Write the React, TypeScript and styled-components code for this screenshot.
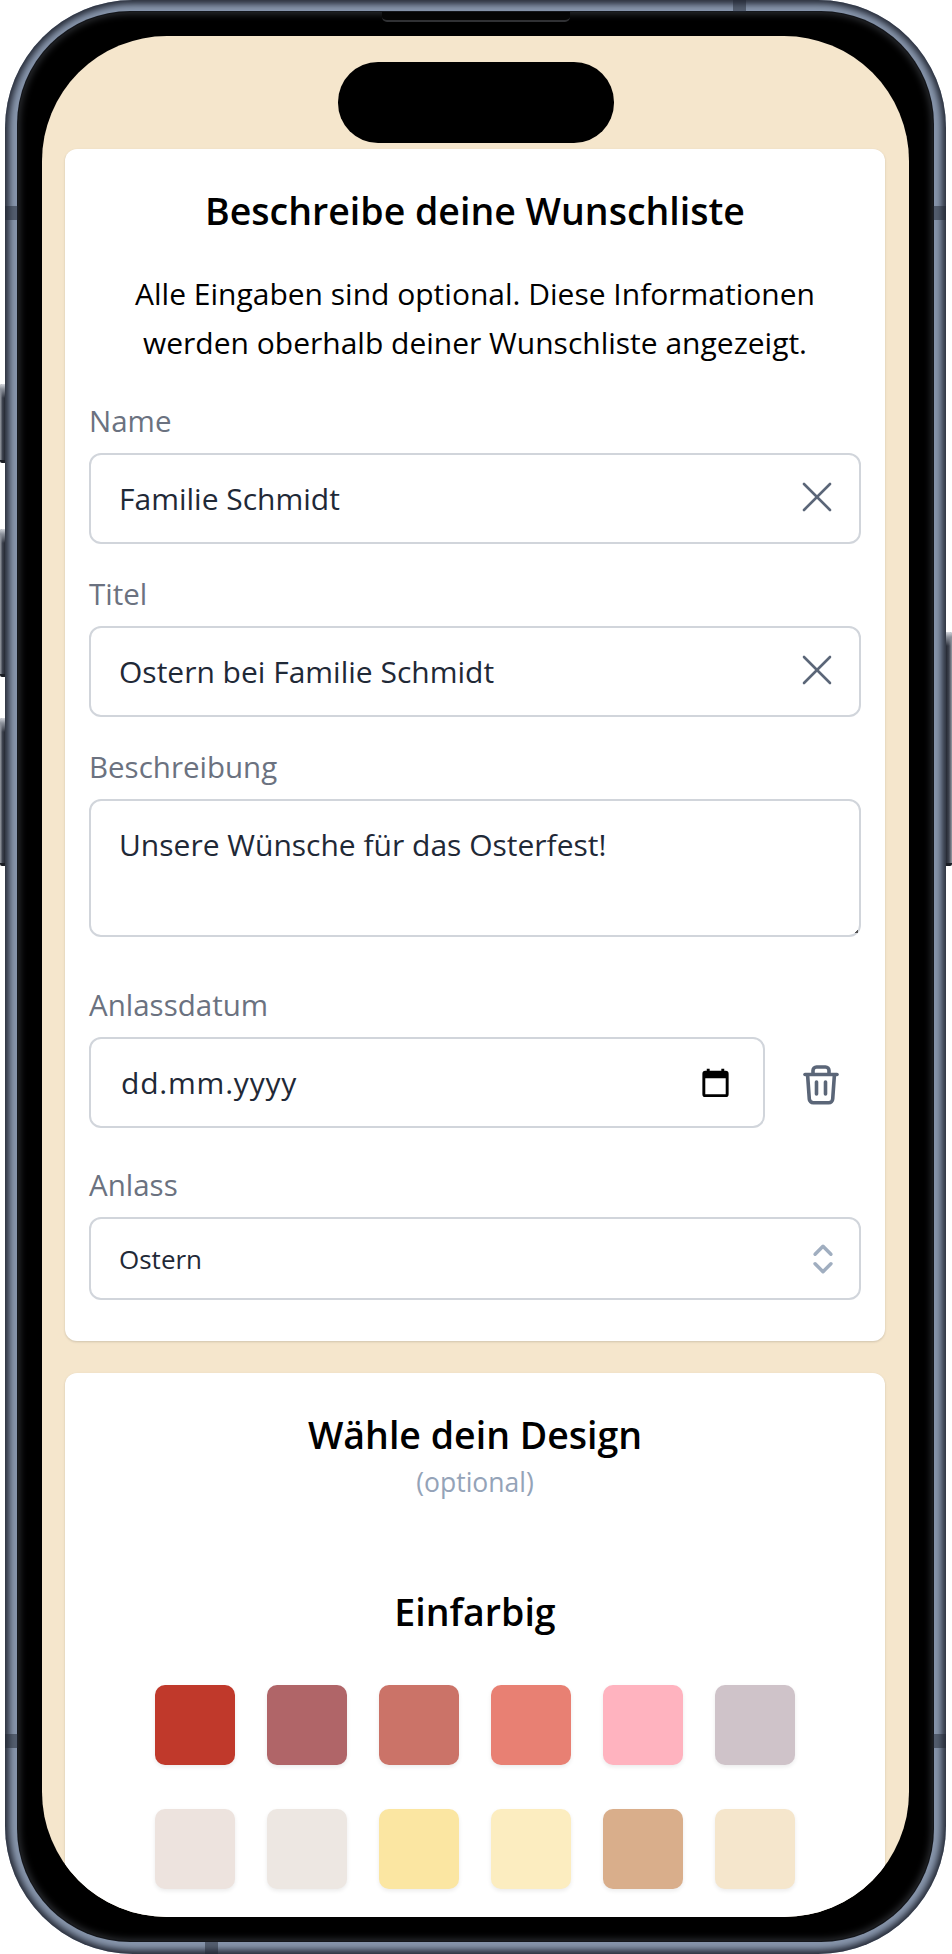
import React from 'react';
import styled, { createGlobalStyle } from 'styled-components';
import { X, ChevronsUpDown } from 'lucide-react';

const GlobalStyle = createGlobalStyle`
  html, body {
    margin: 0;
    padding: 0;
    background: #fff;
  }
  body {
    font-family: "Open Sans", "Noto Sans", "Liberation Sans", sans-serif;
  }
`;

const Device = styled.div`
  position: relative;
  width: 952px;
  height: 1954px;
  box-sizing: border-box;
  padding: 0 6px 0 5px;
`;

const Band = styled.div`
  height: 100%;
  box-sizing: border-box;
  padding: 12px 13px 13px;
  border-radius: 128px;
  background: #8795ab;
  box-shadow: inset 0 0 6px 4px #262b37;
`;

const Bezel = styled.div`
  position: relative;
  height: 100%;
  box-sizing: border-box;
  padding: 24px;
  border-radius: 112px;
  background: #000;
  box-shadow: 0 0 0 1px #15171c, inset 0 0 7px 2px #2b2d31;
`;

const Screen = styled.div`
  height: 100%;
  box-sizing: border-box;
  padding: 113px 24px 0 23px;
  border-radius: 125px;
  overflow: hidden;
  background: #f5e6cc;
  display: flex;
  flex-direction: column;
  gap: 32px;
`;

const Island = styled.div`
  position: absolute;
  top: 50px;
  left: 320px;
  width: 276px;
  height: 81px;
  border-radius: 40px;
  background: #000;
`;

const Speaker = styled.div`
  position: absolute;
  top: 0;
  left: 364px;
  width: 188px;
  height: 8px;
  border-bottom: 2px solid #303134;
  border-radius: 0 0 5px 5px;
  background: #050505;
`;

const LeftButtons = styled.div`
  position: absolute;
  top: 384px;
  left: 0;
  display: flex;
  flex-direction: column;
  gap: 66px;
`;

const VolumeButtons = styled.div`
  display: flex;
  flex-direction: column;
  gap: 41px;
`;

const RightButton = styled.div`
  position: absolute;
  top: 632px;
  right: 0;
`;

const SideButton = styled.div<{ $side: 'left' | 'right'; $height: number }>`
  width: ${p => (p.$side === 'left' ? 5 : 6)}px;
  height: ${p => p.$height}px;
  box-sizing: border-box;
  border-bottom: 3px solid #1b1e25;
  border-radius: ${p => (p.$side === 'left' ? '2px 0 0 2px' : '0 2px 2px 0')};
  background: linear-gradient(180deg, #d5d8de 0, #8b909a 5px, transparent 14px),
    linear-gradient(${p => (p.$side === 'left' ? '270deg' : '90deg')}, #252933 0, #3d424e 50%, #9a9ea6 100%);
`;

const SideSeam = styled.div<{ $side: 'left' | 'right'; $top: number }>`
  position: absolute;
  top: ${p => p.$top}px;
  ${p => p.$side}: ${p => (p.$side === 'left' ? 5 : 6)}px;
  width: 13px;
  height: 14px;
  background: rgba(32, 37, 50, 0.5);
`;

const EdgeSeam = styled.div<{ $edge: 'top' | 'bottom'; $left: number }>`
  position: absolute;
  ${p => p.$edge}: 0;
  left: ${p => p.$left}px;
  width: 13px;
  height: 12px;
  background: rgba(32, 37, 50, 0.5);
`;

const Card = styled.section`
  flex: 0 0 auto;
  box-sizing: border-box;
  padding: 37px 24px 41px;
  border-radius: 12px;
  background: #fff;
  box-shadow: 0 1px 3px rgba(0, 0, 0, 0.1), 0 1px 2px rgba(0, 0, 0, 0.06);
`;

const DesignCard = styled(Card)`
  flex: 1 0 auto;
`;

const Heading = styled.h2`
  margin: 0;
  text-align: center;
  font-size: 37.5px;
  line-height: 50px;
  font-weight: 600;
  color: #000;
`;

const Intro = styled.p`
  margin: 34px 0 34px;
  text-align: center;
  font-size: 30px;
  line-height: 48.6px;
  color: #000;
`;

const Fields = styled.div`
  display: flex;
  flex-direction: column;
  gap: 30px;
`;

const Field = styled.div``;

const DateField = styled(Field)`
  margin-top: 18px;
`;

const OccasionField = styled(Field)`
  margin-top: 7px;
`;

const Label = styled.label`
  display: block;
  margin-bottom: 12px;
  font-size: 29.5px;
  line-height: 40px;
  color: #6b7280;
`;

const InputBox = styled.div`
  position: relative;
  display: flex;
  align-items: center;
  justify-content: space-between;
  box-sizing: border-box;
  height: 91px;
  padding: 0 28px;
  border: 2px solid #d1d5db;
  border-radius: 12px;
  font-size: 30px;
  color: #1f2937;
`;

const TextBox = styled(InputBox)`
  align-items: flex-start;
  height: 138px;
  padding-top: 24px;
  line-height: 40px;

  &::after {
    content: '';
    position: absolute;
    right: 1px;
    bottom: 2px;
    width: 3px;
    height: 3px;
    background: linear-gradient(135deg, transparent 45%, #555 50%);
  }
`;

const ClearIcon = styled(X)`
  flex: none;
  width: 52px;
  height: 52px;
  margin-right: -12px;
  margin-bottom: 3px;
  color: #5b6678;
`;

const DateRow = styled.div`
  display: flex;
  align-items: center;
  gap: 38px;
`;

const DateBox = styled(InputBox)`
  flex: 1;
  padding-left: 30px;
  padding-right: 30px;
  letter-spacing: 0.8px;
`;

const CalendarIcon = styled.svg`
  flex: none;
  width: 35px;
  height: 35px;
  fill: #000;
`;

const TrashIcon = styled.svg`
  flex: none;
  width: 36px;
  height: 40px;
  margin: 5px 22px 0 0;
  fill: none;
  stroke: #5b6678;
  stroke-width: 3.6;
  stroke-linecap: round;
  stroke-linejoin: round;
`;

const SelectBox = styled(InputBox)`
  height: 83px;
  font-size: 26px;
  padding-right: 17px;
`;

const SelectIcon = styled(ChevronsUpDown)`
  flex: none;
  width: 38px;
  height: 38px;
  color: #a0aec0;
`;

const Optional = styled.p`
  margin: 6px 0 0;
  text-align: center;
  font-size: 26.5px;
  line-height: 32px;
  color: #94a3b8;
`;

const SubHeading = styled(Heading)`
  margin-top: 89px;
`;

const Swatches = styled.div`
  display: grid;
  grid-template-columns: repeat(6, 80px);
  justify-content: center;
  column-gap: 32px;
  row-gap: 44px;
  margin-top: 48px;
`;

const Swatch = styled.div<{ $color: string }>`
  width: 80px;
  height: 80px;
  border-radius: 10px;
  background: ${p => p.$color};
  box-shadow: 0 2px 4px rgba(0, 0, 0, 0.08);
`;

const colors = [
  '#c0392b', '#b06568', '#cb7368', '#e88073', '#ffb3bf', '#cfc3c9',
  '#ede3de', '#ede7e2', '#fbe6a2', '#fcedc0', '#d9ae8b', '#f5e6cc',
];

export default function App() {
  return (
    <>
      <GlobalStyle />
      <Device>
        <Band>
          <Bezel>
            <Speaker />
            <Screen>
              <Card>
                <Heading>Beschreibe deine Wunschliste</Heading>
                <Intro>
                  Alle Eingaben sind optional. Diese Informationen werden oberhalb deiner Wunschliste angezeigt.
                </Intro>
                <Fields>
                  <Field>
                    <Label>Name</Label>
                    <InputBox>
                      Familie Schmidt
                      <ClearIcon strokeWidth={1.2} />
                    </InputBox>
                  </Field>
                  <Field>
                    <Label>Titel</Label>
                    <InputBox>
                      Ostern bei Familie Schmidt
                      <ClearIcon strokeWidth={1.2} />
                    </InputBox>
                  </Field>
                  <Field>
                    <Label>Beschreibung</Label>
                    <TextBox>Unsere Wünsche für das Osterfest!</TextBox>
                  </Field>
                  <DateField>
                    <Label>Anlassdatum</Label>
                    <DateRow>
                      <DateBox>
                        dd.mm.yyyy
                        <CalendarIcon viewBox="0 0 24 24">
                          <path d="M19 4h-1V2.6h-2V4H8V2.6H6V4H5a2 2 0 0 0-2 2v14a2 2 0 0 0 2 2h14a2 2 0 0 0 2-2V6a2 2 0 0 0-2-2zm0 16H5V9h14v11z" />
                        </CalendarIcon>
                      </DateBox>
                      <TrashIcon viewBox="0 0 36 40">
                        <path d="M2 9.5h32" />
                        <path d="M10 9V5.5a3.5 3.5 0 0 1 3.5-3.5h9a3.5 3.5 0 0 1 3.5 3.5V9" />
                        <path d="M4.6 10l1.7 24a4 4 0 0 0 4 3.8h15.4a4 4 0 0 0 4-3.8l1.7-24" />
                        <path d="M13.5 17v12" />
                        <path d="M22.5 17v12" />
                      </TrashIcon>
                    </DateRow>
                  </DateField>
                  <OccasionField>
                    <Label>Anlass</Label>
                    <SelectBox>
                      Ostern
                      <SelectIcon strokeWidth={2.2} />
                    </SelectBox>
                  </OccasionField>
                </Fields>
              </Card>
              <DesignCard>
                <Heading>Wähle dein Design</Heading>
                <Optional>(optional)</Optional>
                <SubHeading>Einfarbig</SubHeading>
                <Swatches>
                  {colors.map((c, i) => (
                    <Swatch key={i} $color={c} />
                  ))}
                </Swatches>
              </DesignCard>
            </Screen>
            <Island />
          </Bezel>
        </Band>
        <LeftButtons>
          <SideButton $side="left" $height={79} />
          <VolumeButtons>
            <SideButton $side="left" $height={148} />
            <SideButton $side="left" $height={148} />
          </VolumeButtons>
        </LeftButtons>
        <RightButton>
          <SideButton $side="right" $height={234} />
        </RightButton>
        <SideSeam $side="left" $top={206} />
        <SideSeam $side="right" $top={206} />
        <SideSeam $side="left" $top={1734} />
        <SideSeam $side="right" $top={1734} />
        <EdgeSeam $edge="top" $left={733} />
        <EdgeSeam $edge="bottom" $left={205} />
      </Device>
    </>
  );
}
